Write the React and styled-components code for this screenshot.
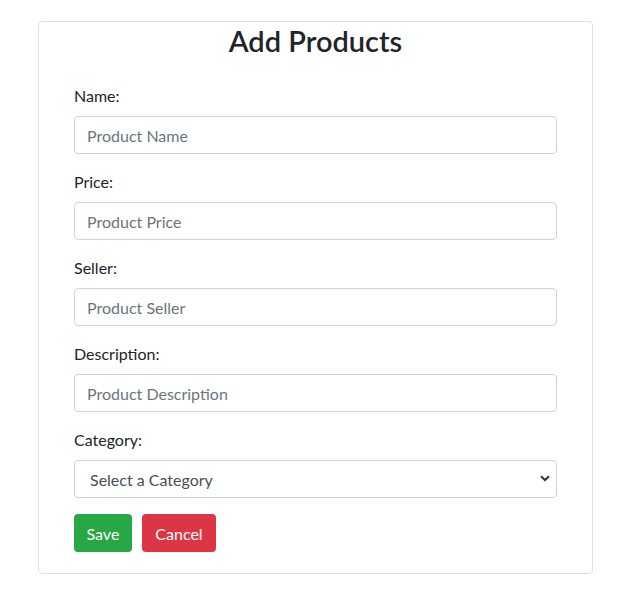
import styled, { createGlobalStyle } from "styled-components";

const GlobalStyle = createGlobalStyle`
  body {
    margin: 0;
    background: #fff;
    font-family: "Segoe UI", Lato, "Liberation Sans", sans-serif;
    color: #212529;
  }
`;

const Page = styled.div`
  display: flex;
  justify-content: center;
  padding-top: 21px;
`;

const Card = styled.div`
  width: 555px;
  box-sizing: border-box;
  border: 1px solid #dee2e6;
  border-radius: 4px;
  padding: 0 35px 21px;
`;

const Title = styled.h2`
  margin: 0 0 24px;
  font-size: 29px;
  font-weight: 600;
  line-height: 38px;
  text-align: center;
`;

const Group = styled.div`
  display: flex;
  flex-direction: column;
  margin-bottom: 16px;
`;

const Label = styled.label`
  font-size: 16px;
  line-height: 24px;
  margin-bottom: 8px;
`;

const Input = styled.input`
  height: 38px;
  box-sizing: border-box;
  padding: 6px 12px;
  font-family: inherit;
  font-size: 16px;
  color: #495057;
  border: 1px solid #ced4da;
  border-radius: 4px;
  &::placeholder {
    color: #6c757d;
  }
`;

const SelectWrap = styled.div`
  position: relative;
`;

const Select = styled.select`
  width: 100%;
  height: 38px;
  box-sizing: border-box;
  padding: 6px 12px 6px 15px;
  font-family: inherit;
  font-size: 16px;
  color: #495057;
  background: #fff;
  border: 1px solid #ced4da;
  border-radius: 4px;
  appearance: none;
`;

const Chevron = styled.svg`
  position: absolute;
  right: 7px;
  top: 15px;
  pointer-events: none;
`;

const Actions = styled.div`
  display: flex;
  gap: 10px;
`;

const Button = styled.button`
  height: 38px;
  padding: 0 ${(p) => p.$px}px;
  font-family: inherit;
  font-size: 16px;
  color: #fff;
  background: ${(p) => p.$bg};
  border: none;
  border-radius: 4px;
`;

const fields = [
  { label: "Name:", placeholder: "Product Name" },
  { label: "Price:", placeholder: "Product Price" },
  { label: "Seller:", placeholder: "Product Seller" },
  { label: "Description:", placeholder: "Product Description" },
];

export default function App() {
  return (
    <>
      <GlobalStyle />
      <Page>
        <Card>
          <Title>Add Products</Title>
          {fields.map((f) => (
            <Group key={f.label}>
              <Label>{f.label}</Label>
              <Input placeholder={f.placeholder} />
            </Group>
          ))}
          <Group>
            <Label>Category:</Label>
            <SelectWrap>
              <Select defaultValue="">
                <option value="">Select a Category</option>
              </Select>
              <Chevron width="10" height="7" viewBox="0 0 10 7">
                <path d="M1 1.2 L5 5 L9 1.2" fill="none" stroke="#333" strokeWidth="2" />
              </Chevron>
            </SelectWrap>
          </Group>
          <Actions>
            <Button $bg="#28a745" $px={12.5}>Save</Button>
            <Button $bg="#dc3545" $px={13.5}>Cancel</Button>
          </Actions>
        </Card>
      </Page>
    </>
  );
}
